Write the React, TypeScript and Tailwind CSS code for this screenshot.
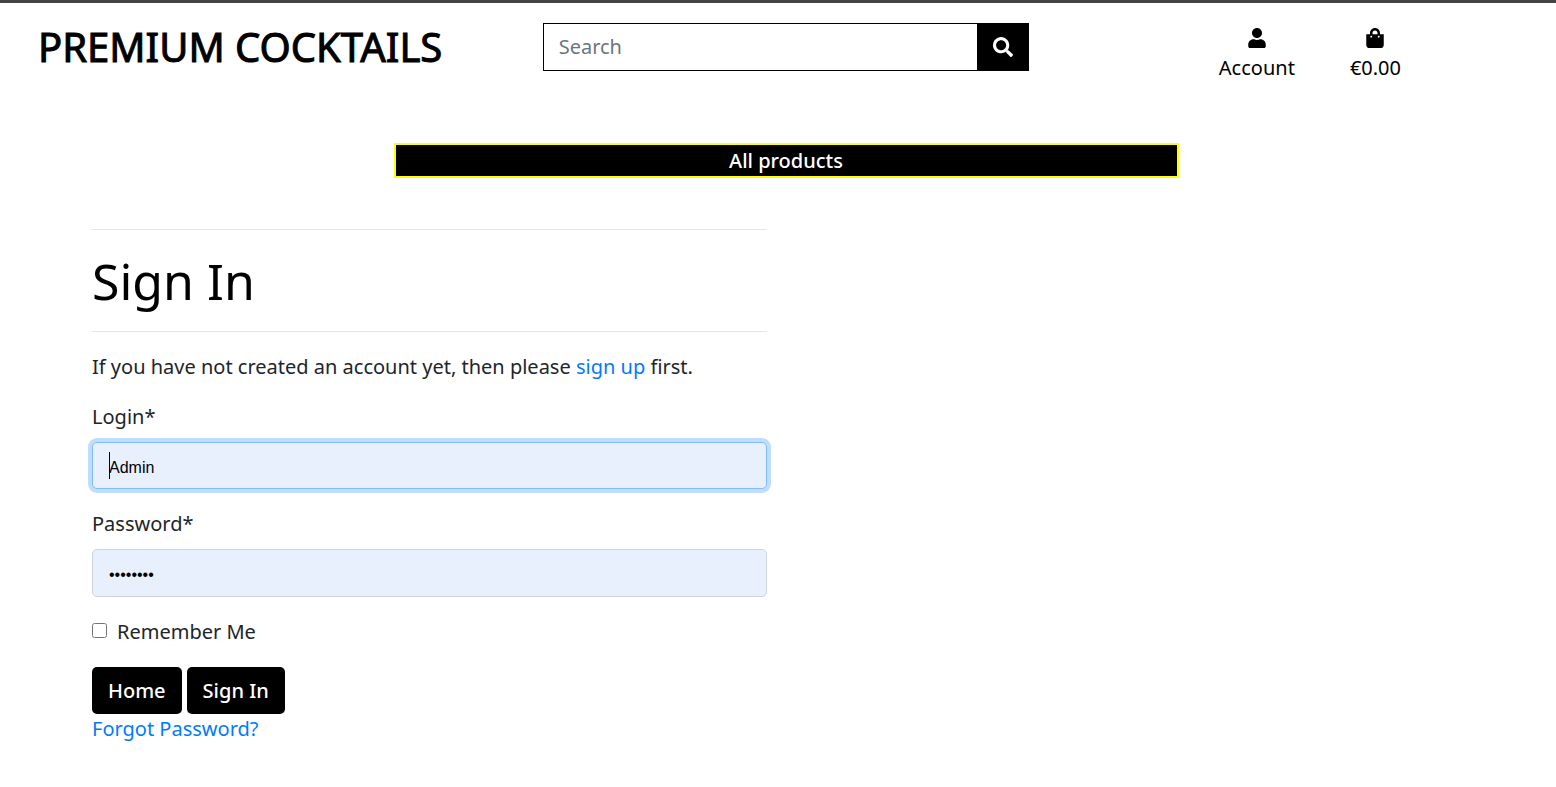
import { FaSearch, FaShoppingBag, FaUser } from "react-icons/fa";

function Header() {
  return (
    <header className="grid grid-cols-3 border-t-3 border-[#444444] pt-5">
      <h2 className="pl-[38px] text-[40px] leading-12 font-normal whitespace-nowrap text-black [-webkit-text-stroke:1px_black]">
        PREMIUM COCKTAILS
      </h2>
      <form className="flex h-12 pl-6 pr-2" role="search">
        <input
          type="search"
          aria-label="Search"
          placeholder="Search"
          className="min-w-0 flex-1 border border-r-0 border-black bg-white px-[15px] text-xl outline-none placeholder:text-[#6c757d]"
        />
        <button
          type="button"
          aria-label="Submit search"
          className="flex w-[52px] items-center justify-center bg-black text-white"
        >
          <FaSearch className="size-5" />
        </button>
      </form>
      <nav className="flex justify-end gap-[55px] pt-[5px] pr-[155px] text-black">
        <a href="#account" className="flex flex-col items-center">
          <FaUser className="size-5" />
          <span className="pt-[5px]">Account</span>
        </a>
        <a href="#bag" className="flex flex-col items-center">
          <FaShoppingBag className="size-5" />
          <span className="pt-[5px]">€0.00</span>
        </a>
      </nav>
    </header>
  );
}

function SignInForm() {
  return (
    <form className="ml-[92px] flex max-w-[675px] flex-col items-start">
      <hr className="w-full border-[#e5e5e5]" />
      <h1 className="mt-[21px] text-[50px] leading-[60px] text-black">Sign In</h1>
      <hr className="mt-5 w-full border-[#e5e5e5]" />
      <p className="mt-5">
        If you have not created an account yet, then please{" "}
        <a href="#signup" className="text-[#007bff]">
          sign up
        </a>{" "}
        first.
      </p>
      <label htmlFor="login" className="mt-5">
        Login*
      </label>
      <div className="relative mt-[10px] w-full">
        <input
          id="login"
          type="text"
          defaultValue="Admin"
          className="block h-[47px] w-full rounded-[5px] border border-[#80bdff] bg-[#e8f0fe] px-4 pt-1 font-['Liberation_Sans',Arial,sans-serif] text-base text-black ring-4 ring-[#bfdeff] outline-none"
        />
        <span className="absolute top-[10px] left-[17px] h-[27px] w-px bg-black" />
      </div>
      <label htmlFor="password" className="mt-5">
        Password*
      </label>
      <input
        id="password"
        type="password"
        defaultValue="cocktail"
        className="mt-[10px] block h-12 w-full rounded-[5px] border border-[#ced4da] bg-[#e8f0fe] px-4 pt-1 font-['Liberation_Sans',Arial,sans-serif] text-base text-black outline-none"
      />
      <label className="mt-5 flex items-center gap-[10px]">
        <input type="checkbox" className="mb-[3px] size-[15px]" />
        Remember Me
      </label>
      <div className="mt-5 flex gap-[5px] font-medium text-white">
        <a href="#home" className="flex h-[47px] items-center rounded-[5px] bg-black px-4">
          Home
        </a>
        <button type="submit" className="h-[47px] rounded-[5px] bg-black px-4">
          Sign In
        </button>
      </div>
      <a href="#forgot" className="text-[#007bff]">
        Forgot Password?
      </a>
    </form>
  );
}

export default function App() {
  return (
    <div className="min-h-screen bg-white font-['Noto_Sans',sans-serif] text-xl leading-[30px] text-[#212529]">
      <Header />
      <div className="mt-[60px] mb-[51px] pl-4">
        <a
          href="#products"
          className="mx-auto block max-w-[785px] border-2 border-[#ffff00] bg-black pt-px text-center font-medium text-white"
        >
          All products
        </a>
      </div>
      <SignInForm />
    </div>
  );
}
